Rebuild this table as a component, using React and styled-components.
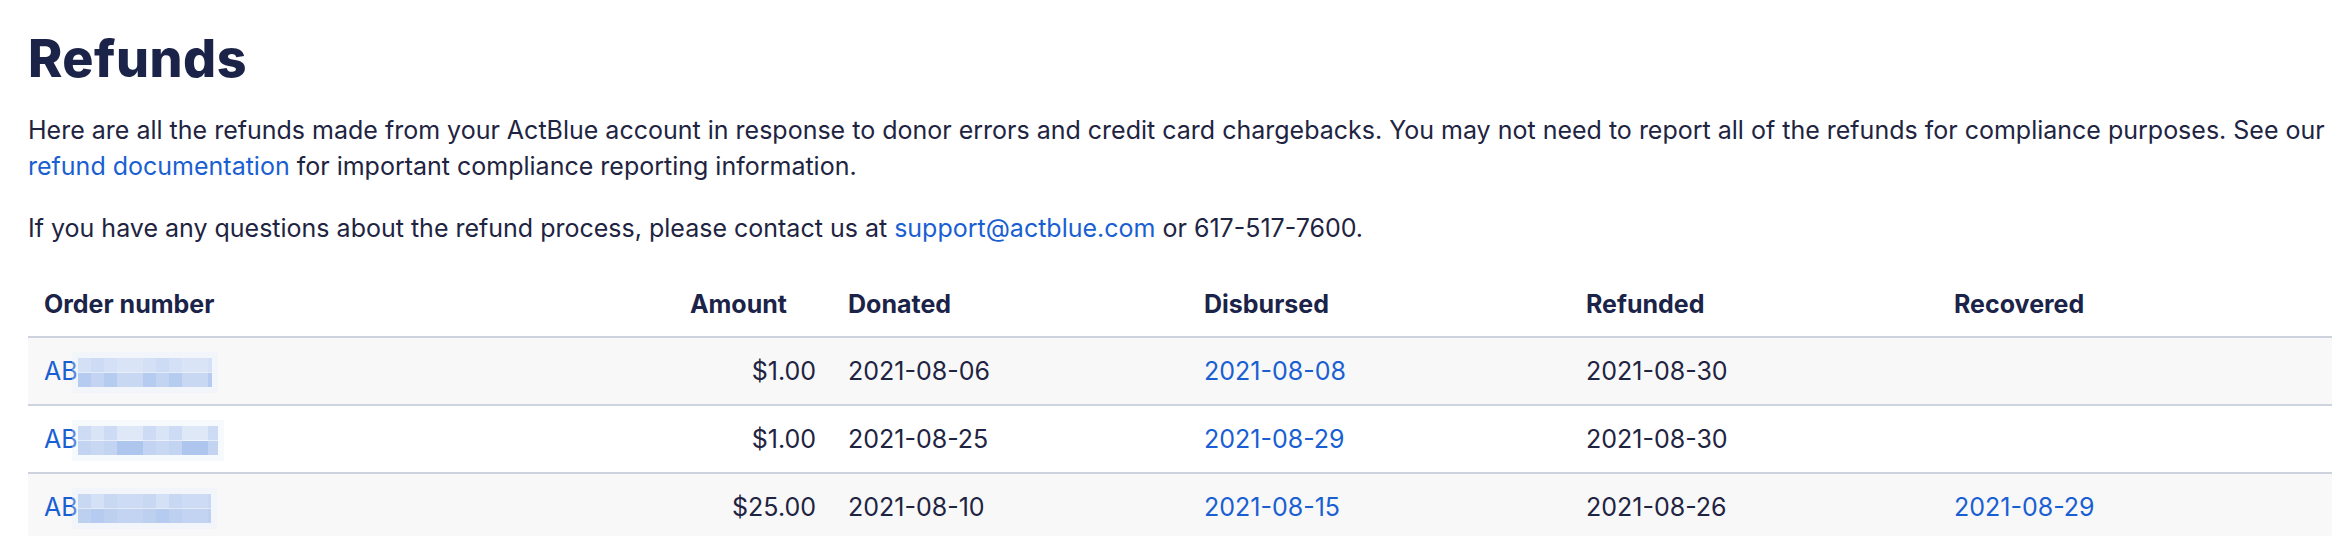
import React from 'react';
import styled, { createGlobalStyle } from 'styled-components';

const GlobalStyle = createGlobalStyle`
  html, body {
    margin: 0;
    padding: 0;
    background: #ffffff;
  }
  body {
    font-family: Inter, "Liberation Sans", sans-serif;
    color: #1e2441;
  }
`;

const Page = styled.div`
  padding: 0 16px 0 28px;
`;

const Title = styled.h1`
  font-family: Inter, "Liberation Sans", sans-serif;
  font-weight: 800;
  font-size: 52px;
  line-height: 62px;
  color: #1b2348;
  margin: 28px 0 22px;
  letter-spacing: 0.5px;
`;

const Paragraph = styled.p`
  font-size: 25px;
  line-height: 36px;
  margin: 0 0 26px;
`;

const Link = styled.a`
  color: #1a5fd2;
  text-decoration: none;
`;

const Table = styled.table`
  width: 2304px;
  border-collapse: collapse;
  table-layout: fixed;
  font-size: 25px;
  line-height: 36px;
  margin-top: 22px;
`;

const HeadCell = styled.th`
  font-weight: 700;
  text-align: ${(p) => (p.$right ? 'right' : 'left')};
  padding: 14px ${(p) => (p.$right ? '45px' : '16px')} 14px 16px;
  color: #1b2348;
`;

const Row = styled.tr`
  border-top: 2px solid #cdd4df;
  background: ${(p) => (p.$striped ? '#f8f8f9' : '#ffffff')};
`;

const Cell = styled.td`
  padding: 15px 16px;
  text-align: ${(p) => (p.$right ? 'right' : 'left')};
  white-space: nowrap;
`;

const Redacted = styled.span`
  display: inline-block;
  vertical-align: -7px;
  width: ${(p) => p.$width}px;
  height: 29px;
  background:
    linear-gradient(${(p) => p.$top}) top / 100% 50% no-repeat,
    linear-gradient(${(p) => p.$bottom}) bottom / 100% 50% no-repeat;
  box-shadow: 0 0 0 6px rgba(230, 237, 247, 0.3);
`;

const lightShades = ['#d9e4f6', '#cddcf4', '#d3e0f5', '#c8d8f3', '#dfe8f7'];
const darkShades = ['#c2d4f1', '#b5cbef', '#bdd0f0', '#aec6ee', '#c8d8f3'];

function stripe(seed, width, shades) {
  const cell = 13;
  const count = Math.ceil(width / cell);
  const stops = [];
  for (let i = 0; i < count; i += 1) {
    const c = shades[(seed * 7 + i * 3 + (i * i) % 5) % shades.length];
    const a = ((i * cell) / width) * 100;
    const b = Math.min((((i + 1) * cell) / width) * 100, 100);
    stops.push(`${c} ${a}%`, `${c} ${b}%`);
  }
  return `to right, ${stops.join(', ')}`;
}

const OrderId = ({ seed, width }) => (
  <Link href="#">
    AB
    <Redacted
      $width={width}
      $top={stripe(seed, width, lightShades)}
      $bottom={stripe(seed + 2, width, darkShades)}
    />
  </Link>
);

const refunds = [
  { seed: 1, width: 134, amount: '$1.00', donated: '2021-08-06', disbursed: '2021-08-08', refunded: '2021-08-30', recovered: '' },
  { seed: 3, width: 140, amount: '$1.00', donated: '2021-08-25', disbursed: '2021-08-29', refunded: '2021-08-30', recovered: '' },
  { seed: 4, width: 133, amount: '$25.00', donated: '2021-08-10', disbursed: '2021-08-15', refunded: '2021-08-26', recovered: '2021-08-29' },
];

const App = () => (
  <Page>
    <GlobalStyle />
    <Title>Refunds</Title>
    <Paragraph>
      Here are all the refunds made from your ActBlue account in response to donor errors and credit card chargebacks.
      You may not need to report all of the refunds for compliance purposes. See our{' '}
      <Link href="#">refund documentation</Link> for important compliance reporting information.
    </Paragraph>
    <Paragraph>
      If you have any questions about the refund process, please contact us at{' '}
      <Link href="#">support@actblue.com</Link> or 617-517-7600.
    </Paragraph>
    <Table>
      <colgroup>
        <col style={{ width: 604 }} />
        <col style={{ width: 200 }} />
        <col style={{ width: 356 }} />
        <col style={{ width: 382 }} />
        <col style={{ width: 368 }} />
        <col style={{ width: 394 }} />
      </colgroup>
      <thead>
        <tr>
          <HeadCell>Order number</HeadCell>
          <HeadCell $right>Amount</HeadCell>
          <HeadCell>Donated</HeadCell>
          <HeadCell>Disbursed</HeadCell>
          <HeadCell>Refunded</HeadCell>
          <HeadCell>Recovered</HeadCell>
        </tr>
      </thead>
      <tbody>
        {refunds.map((r, i) => (
          <Row key={r.seed} $striped={i % 2 === 0}>
            <Cell><OrderId seed={r.seed} width={r.width} /></Cell>
            <Cell $right>{r.amount}</Cell>
            <Cell>{r.donated}</Cell>
            <Cell><Link href="#">{r.disbursed}</Link></Cell>
            <Cell>{r.refunded}</Cell>
            <Cell>{r.recovered && <Link href="#">{r.recovered}</Link>}</Cell>
          </Row>
        ))}
      </tbody>
    </Table>
  </Page>
);

export default App;
